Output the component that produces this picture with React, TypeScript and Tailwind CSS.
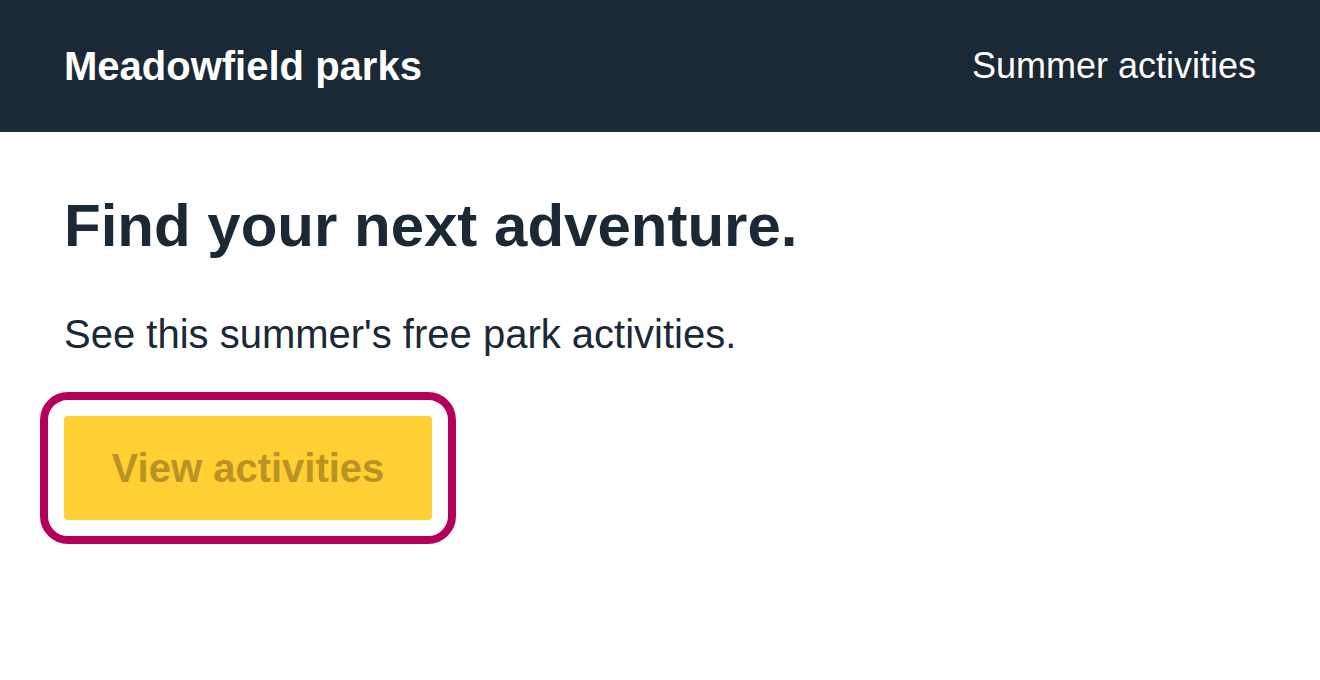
export default function App() {
  return (
    <div className="min-h-screen bg-white font-['Liberation_Sans',Arial,sans-serif] text-[#1b2836]">
      {/* Header */}
      <header className="h-[132px] bg-[#1b2836] px-16 flex items-center justify-between text-white">
        <span className="text-[40px] font-bold leading-none">Meadowfield parks</span>
        <span className="text-[36px] leading-none">Summer activities</span>
      </header>

      <main className="px-16 pt-[58px]">
        <h1 className="text-[60px] font-bold leading-[72px]">Find your next adventure.</h1>
        <p className="mt-[48px] text-[40px] leading-[48px]">See this summer's free park activities.</p>
        <button
          type="button"
          className="mt-[58px] w-[368px] h-[104px] rounded-[4px] bg-[#ffcf33] text-[40px] font-bold text-[#bb9224] outline-8 outline-offset-[16px] outline-[#b5005b]"
        >
          View activities
        </button>
      </main>
    </div>
  );
}
